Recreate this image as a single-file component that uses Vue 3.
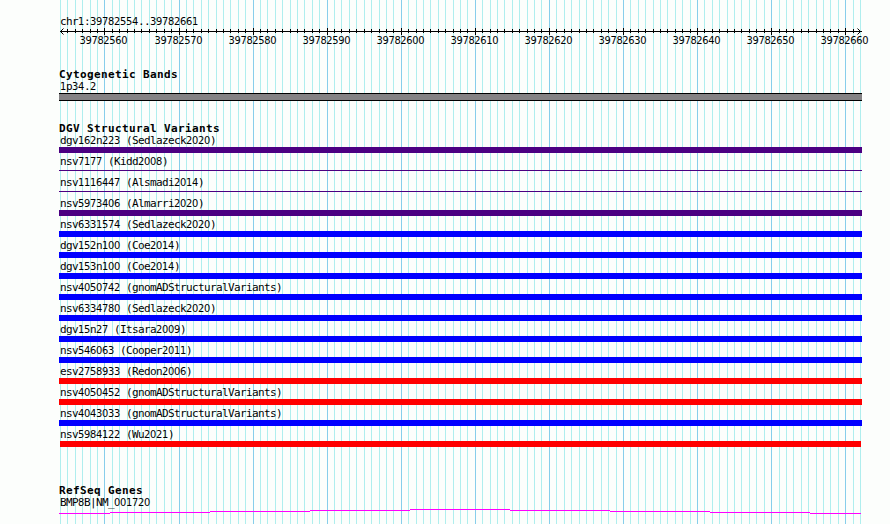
<script setup>
const start = 39782554
const axis = Array.from({ length: 109 }, (_, k) => ({
  x: Math.round(60 + (k * 800) / 108),
  pos: start + k,
  major: (start + k) % 10 === 0,
}))
const majors = axis.filter((t) => t.major)

const variants = [
  ['dgv162n223 (Sedlazeck2020)', 'purple'],
  ['nsv7177 (Kidd2008)', 'purple thin'],
  ['nsv1116447 (Alsmadi2014)', 'purple thin'],
  ['nsv5973406 (Almarri2020)', 'purple'],
  ['nsv6331574 (Sedlazeck2020)', 'blue'],
  ['dgv152n100 (Coe2014)', 'blue'],
  ['dgv153n100 (Coe2014)', 'blue'],
  ['nsv4050742 (gnomADStructuralVariants)', 'blue'],
  ['nsv6334780 (Sedlazeck2020)', 'blue'],
  ['dgv15n27 (Itsara2009)', 'blue'],
  ['nsv546063 (Cooper2011)', 'blue'],
  ['esv2758933 (Redon2006)', 'red'],
  ['nsv4050452 (gnomADStructuralVariants)', 'red'],
  ['nsv4043033 (gnomADStructuralVariants)', 'blue'],
  ['nsv5984122 (Wu2021)', 'red inset'],
]

// Digit runs use a face with an open zero.
const runs = (s) => s.match(/\d+|\D+/g).map((t) => ({ t, num: /\d/.test(t) }))
</script>

<template>
  <main class="browser">
    <svg class="grid" width="890" height="524" shape-rendering="crispEdges">
      <rect v-for="t in axis" :key="t.pos" :x="t.x" y="0" width="1" height="524" :fill="t.major ? '#87ceeb' : '#afeeee'" />
    </svg>
    <div class="tracks">
      <p class="label range"><span v-for="(r, i) in runs('chr1:39782554..39782661')" :key="i" :class="{ num: r.num }">{{ r.t }}</span></p>
      <svg class="ruler" width="831" height="20">
        <g transform="translate(-59 -27)">
          <g shape-rendering="crispEdges">
            <rect x="60" y="31" width="802" height="1" />
            <rect v-for="t in axis.slice(1, -1)" :key="t.pos" :x="t.x" :y="t.major ? 28 : 29" width="1" :height="t.major ? 7 : 4" />
          </g>
          <path d="M63.5 28.5L60.5 31.5L63.5 34.5M857.5 28.5L860.5 31.5L857.5 34.5" fill="none" stroke="#000" />
          <text v-for="t in majors" :key="t.pos" class="num" :x="t.x - 24.6" y="44">{{ t.pos }}</text>
        </g>
      </svg>
      <h2 class="cyto-title">Cytogenetic Bands</h2>
      <p class="label"><span v-for="(r, i) in runs('1p34.2')" :key="i" :class="{ num: r.num }">{{ r.t }}</span></p>
      <div class="band"></div>
      <h2 class="dgv-title">DGV Structural Variants</h2>
      <div v-for="v in variants" :key="v[0]" class="variant">
        <p class="label"><span v-for="(r, i) in runs(v[0])" :key="i" :class="{ num: r.num }">{{ r.t }}</span></p>
        <div class="bar" :class="v[1]"></div>
      </div>
      <h2 class="gene-title">RefSeq Genes</h2>
      <p class="label"><span v-for="(r, i) in runs('BMP8B|NM_001720')" :key="i" :class="{ num: r.num }">{{ r.t }}</span></p>
      <svg class="gene" width="803" height="6" shape-rendering="crispEdges">
        <path d="M0 4h51v1h-51zM51 3h100v1h-100zM151 2h100v1h-100zM251 1h100v1h-100zM351 0h100v1h-100zM451 1h100v1h-100zM551 2h100v1h-100zM651 3h100v1h-100zM751 4h51v1h-51z" fill="#f0f" />
      </svg>
    </div>
  </main>
</template>

<style>
body {
  background: #fcfefc;
  overflow: hidden;
}
</style>

<style scoped>
.browser {
  display: grid;
  width: 890px;
  height: 524px;
  overflow: hidden;
  background: #fcfefc;
  color: #000;
}
.grid,
.tracks {
  grid-area: 1 / 1;
}
.grid {
  display: block;
}
.tracks {
  z-index: 1;
  padding: 15px 0 0 59px;
}
.label,
h2 {
  margin: 0;
  height: 12px;
  white-space: pre;
}
.label {
  padding-left: 1px;
  font: 11px/14px "DejaVu Sans Mono", monospace;
  letter-spacing: -0.622px;
}
.num {
  font-family: "DejaVu Sans Condensed", "DejaVu Sans", sans-serif;
  font-stretch: condensed;
  font-size: 11px;
  letter-spacing: -0.299px;
}
h2 {
  font: bold 11px/14px "DejaVu Sans Mono", monospace;
  letter-spacing: 0.378px;
}
svg {
  display: block;
}
.cyto-title {
  margin-top: 21px;
}
.band {
  width: 803px;
  height: 8px;
  margin-top: 1px;
  box-sizing: border-box;
  background: #848284;
  border: solid #000;
  border-width: 1px 0;
}
.dgv-title {
  margin-top: 21px;
}
.variant {
  height: 21px;
}
.bar {
  width: 803px;
  height: 6px;
  margin-top: 1px;
}
.purple {
  background: #4b0082;
}
.blue {
  background: #00f;
}
.red {
  background: #f00;
}
.thin {
  height: 1px;
  margin-top: 3px;
}
.inset {
  width: 801px;
  margin-left: 1px;
}
.gene-title {
  margin-top: 35px;
}
.gene {
  margin-top: 1px;
}
</style>
